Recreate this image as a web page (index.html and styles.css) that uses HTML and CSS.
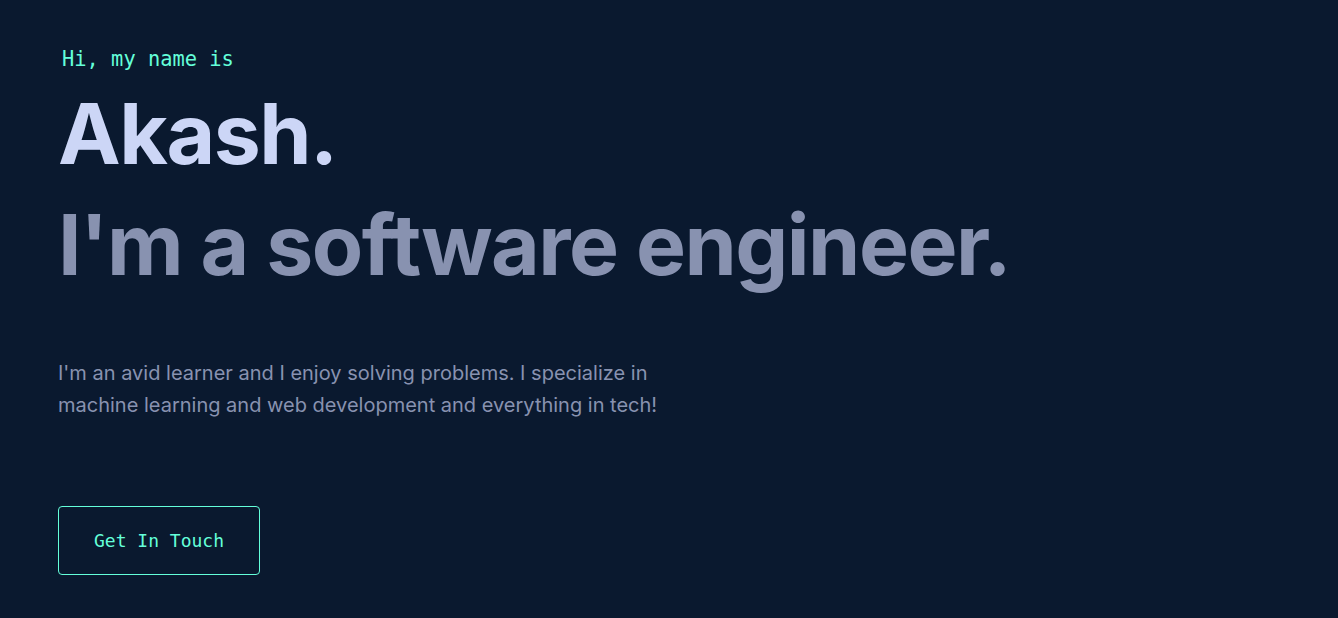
FILE: index.html
```html
<!DOCTYPE html>
<html lang="en">
<head>
<meta charset="utf-8">
<title>Akash</title>
<link rel="stylesheet" href="styles.css">
</head>
<body>
<main class="hero">
  <h1 class="hello">Hi, my name is</h1>
  <h2 class="name">Akash.</h2>
  <h3 class="role">I'm a software engineer.</h3>
  <p class="intro">I'm an avid learner and I enjoy solving problems. I specialize in machine learning and web development and everything in tech!</p>
  <a class="cta" href="#contact">Get In Touch</a>
</main>
</body>
</html>
```
FILE: styles.css
```css
html, body {
  margin: 0;
  padding: 0;
  background: #0a192f;
}
body {
  font-family: "Inter", "Liberation Sans", sans-serif;
  color: #8892b0;
}
.hero {
  display: flex;
  flex-direction: column;
  align-items: flex-start;
  padding: 44px 58px 0;
}
.hello {
  margin: 0 0 0 4px;
  font-family: "DejaVu Sans Mono", "Liberation Mono", monospace;
  font-weight: 400;
  font-size: 20.4px;
  line-height: 30px;
  color: #64ffda;
}
.name {
  margin: 5px 0 0;
  font-size: 84px;
  font-weight: 700;
  line-height: 110px;
  letter-spacing: -1.5px;
  color: #ccd6f6;
}
.role {
  margin: 0;
  font-size: 84px;
  font-weight: 700;
  line-height: 111px;
  letter-spacing: -1.5px;
  color: #8892b0;
}
.intro {
  margin: 57px 0 0;
  max-width: 620px;
  font-size: 20px;
  line-height: 32px;
}
.cta {
  margin-top: 85px;
  display: flex;
  align-items: center;
  justify-content: center;
  width: 200px;
  height: 67px;
  border: 1px solid #64ffda;
  border-radius: 4px;
  color: #64ffda;
  text-decoration: none;
  font-family: "DejaVu Sans Mono", "Liberation Mono", monospace;
  font-size: 18px;
}
```
